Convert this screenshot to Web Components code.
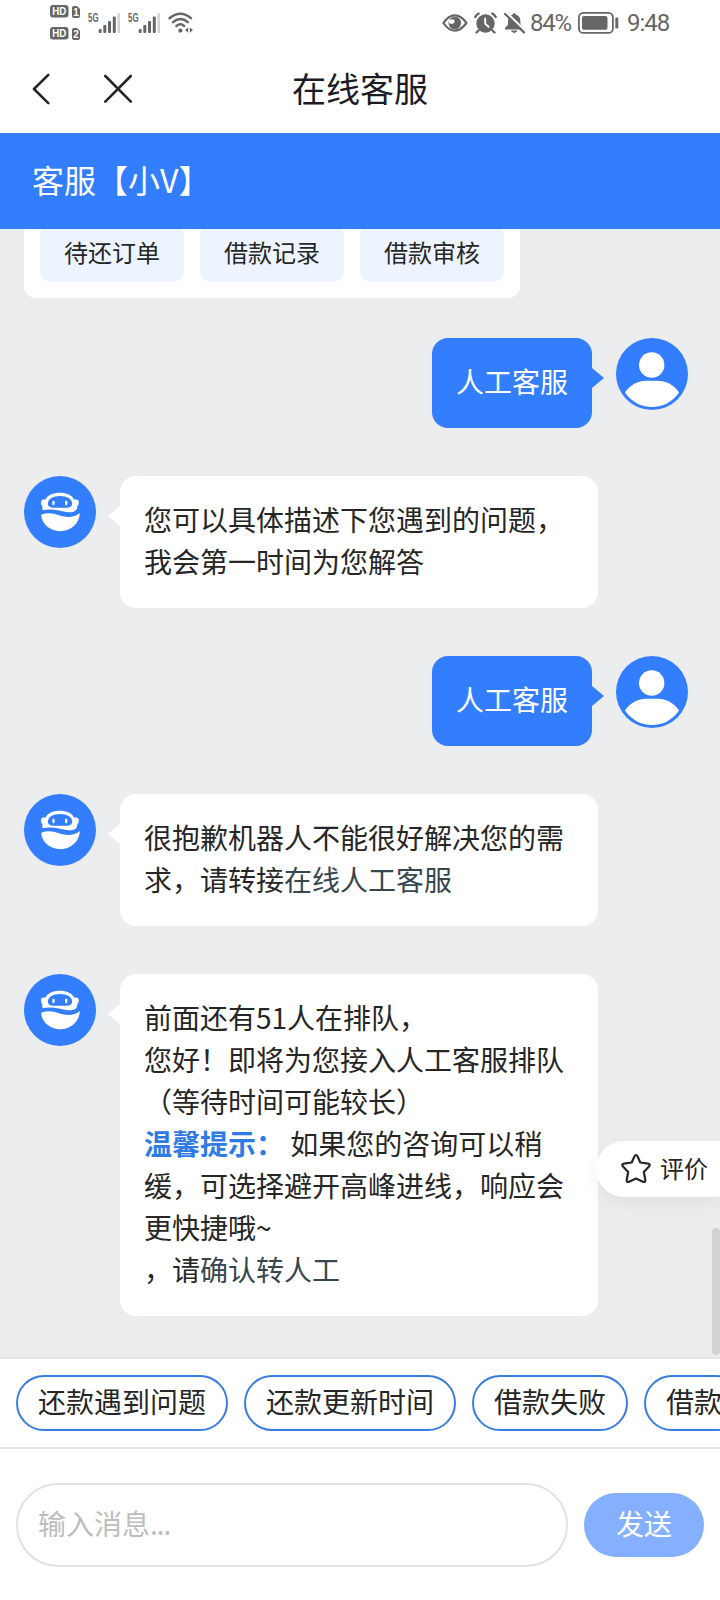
<!DOCTYPE html>
<html lang="zh-CN">
<head>
<meta charset="utf-8">
<title>在线客服</title>
<style>
    html, body { margin: 0; padding: 0; }
    body {
        width: 720px;
        height: 1600px;
        overflow: hidden;
        background: #fff;
        color: #262626;
        font-family: "Noto Sans CJK SC", sans-serif;
        font-size: 28px;
        line-height: 42px;
        text-spacing-trim: space-all;
    }
    b { color: #2f7be6; }
    a { color: #37474f; }
</style>
</head>
<body>
<chat-app>
    <status-bar slot="top"></status-bar>
    <nav-bar slot="top">在线客服</nav-bar>
    <agent-header slot="top">客服【小V】</agent-header>

    <quick-card>
        <quick-button>待还订单</quick-button>
        <quick-button>借款记录</quick-button>
        <quick-button>借款审核</quick-button>
    </quick-card>
    <chat-message from="user">人工客服</chat-message>
    <chat-message>您可以具体描述下您遇到的问题，<br>我会第一时间为您解答</chat-message>
    <chat-message from="user">人工客服</chat-message>
    <chat-message>很抱歉机器人不能很好解决您的需<br>求，请转接<a>在线人工客服</a></chat-message>
    <chat-message>前面还有51人在排队，<br>您好！即将为您接入人工客服排队<br>（等待时间可能较长）<br><b>温馨提示：</b> 如果您的咨询可以稍<br>缓，可选择避开高峰进线，响应会<br>更快捷哦~<br>，请<a>确认转人工</a></chat-message>

    <rate-button slot="float">评价</rate-button>

    <chip-row slot="bottom">
        <chip-item>还款遇到问题</chip-item>
        <chip-item>还款更新时间</chip-item>
        <chip-item>借款失败</chip-item>
        <chip-item>借款</chip-item>
    </chip-row>
    <message-input slot="bottom" placeholder="输入消息...">发送</message-input>
</chat-app>

<script>
// attach an open shadow root and fill it
function render(el, html) {
    el.attachShadow({ mode: 'open' }).innerHTML = html;
}

class ChatApp extends HTMLElement {
    constructor() {
        super();
        render(this, `
        <style>
            :host { display: flex; flex-direction: column; width: 720px; height: 1600px; position: relative; }
            main {
                flex: 1;
                min-height: 0;
                box-sizing: border-box;
                display: flex;
                flex-direction: column;
                justify-content: flex-end;
                gap: 48px;
                padding: 0 32px 41px 24px;
                background: #ebedef;
                overflow: hidden;
                position: relative;
            }
            .thumb {
                position: absolute;
                right: 0;
                bottom: 2px;
                width: 8px;
                height: 127px;
                border-radius: 4px;
                background: #d1d2d4;
            }
        </style>
        <slot name="top"></slot>
        <main>
            <slot></slot>
            <slot name="float"></slot>
            <div class="thumb"></div>
        </main>
        <slot name="bottom"></slot>
        `);
    }
}

class StatusBar extends HTMLElement {
    constructor() {
        super();
        const hd = n => `
            <svg width="30" height="13" viewBox="0 0 30 13">
                <rect width="18.5" height="12.6" rx="3" fill="#666"/>
                <text x="2.2" y="10.4" font-size="11.5" font-weight="700" fill="#fff" textLength="14" lengthAdjust="spacingAndGlyphs">HD</text>
                <path d="M22 3a2 2 0 0 1 2-2h3l3 3v7a2 2 0 0 1-2 2h-4a2 2 0 0 1-2-2z" fill="#666"/>
                <text x="26" y="10.7" text-anchor="middle" font-size="10" font-weight="700" fill="#fff">${n}</text>
            </svg>`;
        const signal = `
            <svg width="32" height="22" viewBox="0 0 32 22">
                <text x="0" y="10" font-size="12" font-weight="700" fill="#666" textLength="10.5" lengthAdjust="spacingAndGlyphs">5G</text>
                <g fill="#666">
                    <rect x="10.6" y="17" width="3" height="4" rx="1"/>
                    <rect x="15.3" y="13" width="3" height="8" rx="1"/>
                    <rect x="20" y="9" width="3" height="12" rx="1"/>
                    <rect x="24.8" y="4.5" width="3" height="16.5" rx="1"/>
                </g>
                <rect x="29.4" y="1" width="2.6" height="20" rx="1" fill="#d4d4d4"/>
            </svg>`;
        render(this, `
        <style>
            :host {
                display: flex;
                align-items: center;
                height: 45px;
                padding: 0 50px;
                color: #666;
                font: 24px/30px Roboto, "Noto Sans", sans-serif;
            }
            svg { display: block; font-family: "Liberation Sans", sans-serif; }
            .hd { display: flex; flex-direction: column; gap: 9px; }
            .left, .right { display: flex; align-items: center; }
            .left { gap: 8px; }
            .right { margin-left: auto; }
            .num { letter-spacing: -1px; }
        </style>
        <div class="left">
            <div class="hd">${hd(1)}${hd(2)}</div>
            ${signal}${signal}
            <svg width="26" height="22" viewBox="0 0 26 22" fill="none" stroke="#666" stroke-width="2.4" stroke-linecap="round">
                <path d="M1.5 6.2Q12.5 -2.6 23 6.2"/>
                <path d="M5 10.2Q12.5 4 19.8 10.2"/>
                <path d="M8.4 14Q12.5 10.6 16.2 14"/>
                <circle cx="12.4" cy="18.6" r="2.1" fill="#666" stroke="none"/>
                <path d="M20.2 15.4v5.4L17 18.1zM21.8 15.4v5.4L25 18.1z" fill="#666" stroke="none"/>
            </svg>
        </div>
        <div class="right">
            <svg width="26" height="18" viewBox="0 0 26 18">
                <path d="M1.4 9Q6.500 1.400 12.800 1.400T24.400 9Q19 16.600 12.800 16.600T1.400 9z" fill="none" stroke="#666" stroke-width="2.2"/>
                <circle cx="12.800" cy="9" r="6.300" fill="#666"/>
                <path d="M7.500 5.500h4.500q1.600 3.600-1.500 4.300-2.500.4-4-1.300z" fill="#fff"/>
            </svg>
            <svg style="margin-left:6px" width="23" height="22" viewBox="0 0 23 22">
                <circle cx="11.500" cy="11.500" r="9.200" fill="#666"/>
                <path d="M11.200 6.500v5.300l3.400 3" fill="none" stroke="#fff" stroke-width="1.900" stroke-linecap="round"/>
                <path d="M1.300 5Q2.400 2.700 4.600 1.500M21.700 5Q20.600 2.700 18.400 1.500M4.500 18.500l-2 2M18.500 18.500l2 2" fill="none" stroke="#666" stroke-width="2.400" stroke-linecap="round"/>
            </svg>
            <svg style="margin-left:7px" width="21" height="22" viewBox="0 0 21 22">
                <path d="M1 17.600v-1.800l3-3V8.500q.5-4.600 4.300-5.700Q10.200-.6 12 2.800q4 1.100 4.400 5.900v4.100l3 3v1.800z" fill="#666"/>
                <path d="M7.500 19h5.500q-2.700 3-5.500 0z" fill="#666" stroke="#666"/>
                <path d="M2.400 .6l19 18.400" stroke="#fff" stroke-width="2.200"/>
                <path d="M1 2l19 18.400" stroke="#666" stroke-width="2.200" stroke-linecap="round"/>
            </svg>
            <span class="num" style="margin-left:5px; width:43px; letter-spacing:-1.300px">84%</span>
            <svg style="margin-left:5px" width="41" height="22" viewBox="0 0 41 22">
                <rect x=".9" y=".9" width="34" height="20" rx="4.500" fill="none" stroke="#666" stroke-width="1.800"/>
                <rect x="4" y="4" width="25.500" height="13.800" rx="2" fill="#666"/>
                <rect x="37.300" y="5.500" width="3" height="11" rx="1.200" fill="#666"/>
            </svg>
            <span class="num" style="margin-left:8px; width:43px">9:48</span>
        </div>
        `);
    }
}

class NavBar extends HTMLElement {
    constructor() {
        super();
        render(this, `
        <style>
            :host {
                display: grid;
                grid-template-columns: 1fr auto 1fr;
                align-items: center;
                height: 88px;
                padding: 0 32px;
                color: #1b1b26;
                font-size: 34px;
            }
            .icons { display: flex; gap: 54px; }
            .title { padding-bottom: 3px; }
        </style>
        <div class="icons">
            <svg width="18" height="32" viewBox="0 0 18 32" fill="none" stroke="#262626" stroke-width="2.6" stroke-linecap="round" stroke-linejoin="round">
                <path d="M16.300 1.800L2 16l14.300 14.200"/>
            </svg>
            <svg width="28" height="32" viewBox="0 0 28 32" stroke="#262626" stroke-width="2.6" stroke-linecap="round">
                <path d="M1.300 3l25.500 25.600M26.800 3L1.300 28.600"/>
            </svg>
        </div>
        <div class="title"><slot></slot></div>
        `);
    }
}

class AgentHeader extends HTMLElement {
    constructor() {
        super();
        render(this, `
        <style>
            :host {
                display: flex;
                align-items: center;
                box-sizing: border-box;
                height: 96px;
                padding: 0 32px 5px;
                background: #337dff;
                color: #fff;
                font-size: 32px;
            }
        </style>
        <slot></slot>
        `);
    }
}

class QuickCard extends HTMLElement {
    constructor() {
        super();
        render(this, `
        <style>
            :host {
                display: flex;
                gap: 16px;
                align-self: flex-start;
                flex: none;
                margin-bottom: -8px;
                padding: 16px;
                border-radius: 12px;
                background: #fff;
            }
        </style>
        <slot></slot>
        `);
    }
}

class QuickButton extends HTMLElement {
    constructor() {
        super();
        render(this, `
        <style>
            :host {
                display: flex;
                align-items: center;
                justify-content: center;
                box-sizing: border-box;
                width: 144px;
                height: 58px;
                padding-bottom: 2px;
                border-radius: 12px;
                background: #edf4ff;
                font-size: 24px;
            }
        </style>
        <slot></slot>
        `);
    }
}

class ChatMessage extends HTMLElement {
    constructor() {
        super();
        const user = this.getAttribute('from') === 'user';
        const userFace = `
            <circle cx="35.700" cy="27" r="12.700"/>
            <path d="M9 54.500C14 47 22 42.800 30 42.800H42C50 42.800 58 47 63 54.500A32.400 32.400 0 0 1 9 54.500z"/>`;
        const botFace = `
            <path d="M17 26.500Q17 23.500 19.500 23.500H21.500C23.500 19 29 16.700 35.800 16.700S48 19 50 23.500H52Q54.800 23.500 54.800 26.500Q54.800 29 53.300 30Q53.500 34.500 49.500 35.700C44 37 39 35.500 35 34.600C29 33.300 23.500 33 18.500 34.300L18.300 30Q17 29 17 26.500z"/>
            <path d="M36 20C29 20 23.900 23 23.900 27.500c0 3.300 2.400 4.200 6.500 4.200h11.200c4.100 0 6.500-.9 6.500-4.200C48.100 23 43 20 36 20z" fill="#337dff"/>
            <ellipse cx="29.500" cy="27" rx="1.200" ry="2.400"/>
            <ellipse cx="42.200" cy="27" rx="1.200" ry="2.400"/>
            <path d="M17.200 38.800C23 36.500 29 37.200 35 39.300C43 42 50.500 41.500 55.800 37C55.800 47 47 55.200 36.500 55.200C25.500 55.200 17.500 47.500 17.200 38.800z"/>`;
        render(this, `
        <style>
            :host {
                display: flex;
                flex: none;
                align-items: flex-start;
                gap: 24px;
            }
            :host([from="user"]) { flex-direction: row-reverse; }
            svg { flex: none; }
            .bubble {
                position: relative;
                box-sizing: border-box;
                width: 478px;
                padding: 22px 24px 26px;
                border-radius: 16px;
                background: #fff;
                white-space: nowrap;
            }
            .bubble::before {
                content: "";
                position: absolute;
                top: 30px;
                left: -12px;
                border: solid transparent;
                border-width: 10px 12px 10px 0;
                border-right-color: #fff;
            }
            :host([from="user"]) .bubble { width: auto; background: #337dff; color: #fff; }
            :host([from="user"]) .bubble::before {
                left: auto;
                right: -12px;
                border-width: 10px 0 10px 12px;
                border-left-color: #337dff;
            }
        </style>
        <svg width="72" height="72" viewBox="0 0 72 72" fill="#fff">
            <circle cx="36" cy="36" r="36" fill="#337dff"/>
            ${user ? userFace : botFace}
        </svg>
        <div class="bubble"><slot></slot></div>
        `);
    }
}

class RateButton extends HTMLElement {
    constructor() {
        super();
        render(this, `
        <style>
            :host {
                position: absolute;
                right: 0;
                bottom: 160px;
                box-sizing: border-box;
                display: flex;
                align-items: center;
                gap: 8px;
                width: 124px;
                height: 56px;
                padding-left: 24px;
                border-radius: 28px 0 0 28px;
                background: #fff;
                box-shadow: 0 6px 20px rgba(0, 0, 0, .06);
                font-size: 24px;
            }
            span { padding-bottom: 3px; }
        </style>
        <svg width="32" height="32" viewBox="0 0 32 32" fill="none" stroke="#262626" stroke-width="2.2" stroke-linejoin="round">
            <path d="M16 2Q17 2 17.500 3.200L20.300 9.500L28 10.700Q31 11.300 29 13.500L23.800 19L25.300 27Q25.500 29.700 23 28.800L16 25.500L9 28.800Q6.500 29.700 6.700 27L8.200 19L3 13.500Q1 11.300 4 10.700L11.700 9.500L14.500 3.200Q15 2 16 2z"/>
        </svg>
        <span><slot></slot></span>
        `);
    }
}

class ChipRow extends HTMLElement {
    constructor() {
        super();
        render(this, `
        <style>
            :host {
                display: flex;
                gap: 16px;
                padding: 16px;
                border: solid #e3e4e6;
                border-width: 2px 0;
                overflow: hidden;
                background: #fff;
            }
        </style>
        <slot></slot>
        `);
    }
}

class ChipItem extends HTMLElement {
    constructor() {
        super();
        render(this, `
        <style>
            :host {
                display: flex;
                flex: none;
                align-items: center;
                box-sizing: border-box;
                height: 56px;
                padding: 0 20px 4px;
                border: 2px solid #3a7be0;
                border-radius: 28px;
            }
        </style>
        <slot></slot>
        `);
    }
}

class MessageInput extends HTMLElement {
    constructor() {
        super();
        render(this, `
        <style>
            :host {
                display: flex;
                align-items: center;
                gap: 16px;
                height: 84px;
                padding: 34px 16px 33px;
                background: #fff;
            }
            .field {
                flex: 1;
                box-sizing: border-box;
                height: 84px;
                padding: 17px 20px;
                border: 2px solid #e2e2e2;
                border-radius: 42px;
                color: #bdbdbd;
            }
            .dots { letter-spacing: -1px; }
            .send {
                display: flex;
                align-items: center;
                justify-content: center;
                box-sizing: border-box;
                width: 120px;
                height: 64px;
                padding-bottom: 4px;
                border-radius: 32px;
                background: #85b0ff;
                color: #fff;
            }
        </style>
        <div class="field">${this.getAttribute('placeholder').replace('...', '<span class="dots">...</span>')}</div>
        <div class="send"><slot></slot></div>
        `);
    }
}

customElements.define('chat-app', ChatApp);
customElements.define('status-bar', StatusBar);
customElements.define('nav-bar', NavBar);
customElements.define('agent-header', AgentHeader);
customElements.define('quick-card', QuickCard);
customElements.define('quick-button', QuickButton);
customElements.define('chat-message', ChatMessage);
customElements.define('rate-button', RateButton);
customElements.define('chip-row', ChipRow);
customElements.define('chip-item', ChipItem);
customElements.define('message-input', MessageInput);
</script>
</body>
</html>
